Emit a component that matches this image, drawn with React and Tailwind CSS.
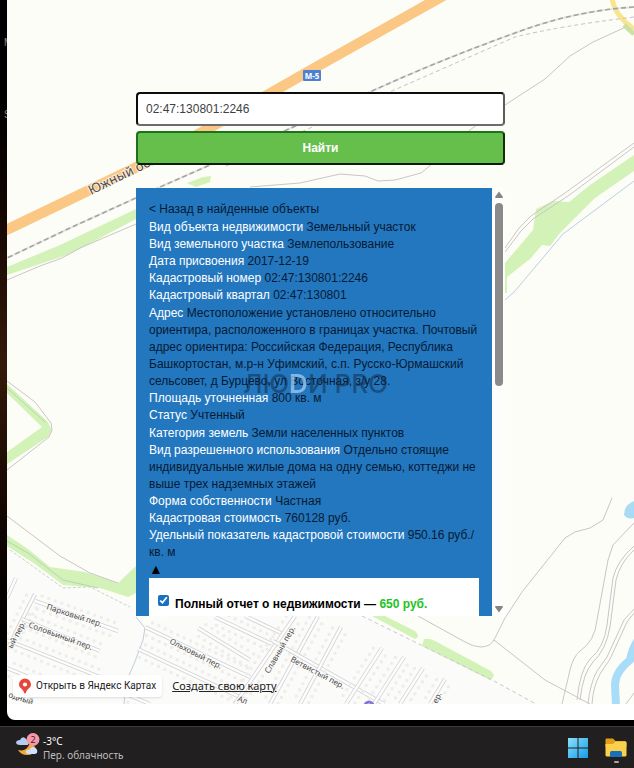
import React from "react";

const STREETS = [
  [16, 578, 7, 598, 0],
  [35, 594, 9, 646, 1],
  [35, 601, 118, 631, 1],
  [22, 619, 100, 651, 1],
  [7, 640, 100, 677, 1],
  [7, 668, 60, 690, 1],
  [145, 627, 250, 677, 1],
  [138, 649, 246, 700, 1],
  [198, 628, 250, 660, 1],
  [215, 617, 272, 644, 1],
  [245, 616, 281, 633, 0],
  [295, 616, 235, 704, 1],
  [318, 616, 270, 704, 1],
  [273, 641, 384, 704, 0],
  [341, 627, 300, 704, 1],
  [382, 648, 346, 704, 1],
  [404, 657, 374, 704, 1],
  [423, 668, 400, 704, 1],
  [445, 679, 430, 704, 1],
  [126, 694, 150, 704, 1],
];

const LABELS = [
  ["Парковый пер.", 46, 609, 18, 8],
  ["Соловьиный пер.", 28, 627, 20, 8],
  ["ый пер.", 12, 649, -62, 8],
  ["Ольховый пер.", 169, 643, 27, 8],
  ["Славный пер.", 269, 674, -60, 8],
  ["Ветвистый пер.", 290, 661, 28, 8],
  ["ер.", 437, 704, -64, 8],
  ["Ал", 237, 701, 20, 8],
  ["одный", 8, 697, 18, 8],
  ["Южный обход", 91, 195, -26, 13],
];

function Street({ line }) {
  const [x1, y1, x2, y2, houses] = line;
  const dx = x2 - x1;
  const dy = y2 - y1;
  const len = Math.hypot(dx, dy);
  const nx = -dy / len;
  const ny = dx / len;
  const dots = [];
  if (houses) {
    for (let d = 5; d < len; d += 7) {
      for (const side of [-7, 7]) {
        dots.push([x1 + (dx * d) / len + nx * side, y1 + (dy * d) / len + ny * side]);
      }
    }
  }
  return (
    <g>
      <path d={`M${x1} ${y1}L${x2} ${y2}`} stroke="#d3d2d4" strokeWidth="4" />
      <path d={`M${x1} ${y1}L${x2} ${y2}`} stroke="#fefefe" strokeWidth="2.4" />
      {dots.map(([x, y], i) => (
        <rect key={i} x={x - 1.5} y={y - 1.5} width="3" height="3" fill="#efedea" />
      ))}
    </g>
  );
}

function MapDrawing() {
  return (
    <svg
      className="absolute inset-0 h-full w-full"
      viewBox="7 0 627 704"
      preserveAspectRatio="xMidYMin slice"
      fill="none"
      aria-hidden="true"
    >
      <rect x="7" width="627" height="704" fill="#fdfdf8" />
      <path d="M7 546L63 586 128 600 145 625 250 590 360 615 494 680 535 704H7Z" fill="#fbfbf9" />

      <g fill="#d3f2b8">
        <path d="M7 267L60 245 136 209V219L70 254 7 275Z" />
        <path d="M187 183L203 177 211 176 210 182 196 187Z" />
        <path d="M505 263L533 230 536 209 553 201 569 202 590 185 634 155V171L595 198 560 233 550 246 542 245 530 259 507 277V293H505Z" />
        <path d="M7 384L47 421 52 430 48 437 7 464V452L42 427 7 393Z" />
        <path d="M7 535L28 549 50 567 85 572 118 583 136 566V593L128 597 100 588 63 585 35 564 7 546Z" />
        <path d="M372 616H385L415 631Q421 637 415 639Z" />
        <path d="M424 639Q429 638 435 641L491 671Q497 677 490 680L422 646Z" />
      </g>

      <g stroke="#cac5c8" strokeWidth="1">
        <path d="M7 280L40 266 62 258 80 248 136 224" />
        <path d="M7 381L35 402 51 423 52 430 49 437 7 470" />
        <path d="M7 388L45 422" stroke="#b9d3ad" />
        <path d="M7 516L60 556 90 573 118 583" />
        <path d="M7 541L28 553 63 580 98 588" stroke="#bcd0b8" />
        <path d="M505 248L519 228 531 216 565 193 634 143" />
        <path d="M505 252L521 231 533 219 568 196 634 147" />
        <path d="M505 300L515 291 563 234 634 181" stroke="#b9cfe2" />
        <path d="M505 105L545 79 570 56 593 42 628 26" />
        <path d="M250 187L300 183 340 174 365 176 378 181 395 180 421 173 432 164 470 130 478 124" />
        <path d="M612 498L603 520 590 528 575 532 565 538 522 592 505 618 495 638Q491 647 481 647 474 647 465 642L418 616" />
        <path d="M494 640L545 680 590 704" />
        <path d="M634 523L613 545 608 560 597 620Q595 641 580 651 573 657 570 670L562 704" />
        <path d="M634 546Q617 561 613 578L607 625Q604 648 590 659 580 670 577 700" />
        <path d="M634 550Q620 563 616 580L610 627Q606 650 593 662 583 673 580 700" />
        <path d="M634 609L624 620 613 644 607 657 597 671Q590 684 588 704" />
        <path d="M634 613L627 622 616 646 610 659 600 674Q593 687 592 704" />
        <path d="M626 704L634 693" />
        <path d="M136 617L145 628 143 640 134 664 126 682 124 704" stroke="#bfcddd" />
      </g>
      <path d="M10 550L45 575 63 588 90 587 130 607" stroke="#c3d6c6" strokeDasharray="3 2" />
      <path d="M362 616L494 681 536 704" stroke="#c9c6dc" strokeDasharray="4 3" />

      {STREETS.map((line, i) => (
        <Street key={i} line={line} />
      ))}

      <path d="M612 -2Q614 15 634 29" stroke="#fae58f" strokeWidth="5" />
      <path d="M624 25L634 34" stroke="#c9e2a4" strokeWidth="5" />
      <path d="M634 501Q624 505 624 515 628 520 634 518Z" fill="#a9dcf4" />
      <path d="M638 640Q632 649 630 660 615 672 615 685L616 706" stroke="#a9dcf7" strokeWidth="8" />
      <circle cx="369" cy="706" r="4" stroke="#8378d8" strokeWidth="3" />

      <path d="M450 -8L318 66 213 126 145 163 75 197 0 233" stroke="#fac884" strokeWidth="10.500" />
      <path d="M634 7Q573 11 515 33 440 60 372 91L210 165 160 187 70 228 7 258" stroke="#e8e6e4" strokeWidth="2" />
      <path
        d="M634 7Q573 11 515 33 440 60 372 91L210 165 160 187 70 228 7 258"
        stroke="#a5a3a4"
        strokeWidth="1.600"
        strokeDasharray="5 3"
      />
      <path d="M634 17Q560 26 515 37L392 91 226 166" stroke="#c4c1c2" strokeDasharray="4 3" />

      <g fontFamily="'Noto Sans', sans-serif" fill="#4c4b4c" stroke="#fdfdfb" strokeWidth="2" strokeOpacity="0.7" paintOrder="stroke">
        {LABELS.map(([text, x, y, angle, size]) => (
          <text key={text} transform={`translate(${x} ${y}) rotate(${angle})`} fontSize={size}>
            {text}
          </text>
        ))}
      </g>
      <rect x="303" y="70" width="18" height="11" rx="1" fill="#4d80d2" />
      <text x="312" y="79" fontSize="8" fontWeight="700" textAnchor="middle" fill="#fff" fontFamily="'Noto Sans', sans-serif">
        М-5
      </text>
    </svg>
  );
}

const GROUPS = [
  [
    ["Вид объекта недвижимости", "Земельный участок"],
    ["Вид земельного участка", "Землепользование"],
    ["Дата присвоения", "2017-12-19"],
    ["Кадастровый номер", "02:47:130801:2246"],
    ["Кадастровый квартал", "02:47:130801"],
  ],
  [
    [
      "Адрес",
      "Местоположение установлено относительно ориентира, расположенного в границах участка. Почтовый адрес ориентира: Российская Федерация, Республика Башкортостан, м.р-н Уфимский, с.п. Русско-Юрмашский сельсовет, д Бурцево, ул Восточная, з/у 28.",
    ],
    ["Площадь уточненная", "800 кв. м"],
    ["Статус", "Учтенный"],
  ],
  [
    ["Категория земель", "Земли населенных пунктов"],
    [
      "Вид разрешенного использования",
      "Отдельно стоящие индивидуальные жилые дома на одну семью, коттеджи не выше трех надземных этажей",
    ],
    ["Форма собственности", "Частная"],
    ["Кадастровая стоимость", "760128 руб."],
    ["Удельный показатель кадастровой стоимости", "950.16 руб./кв. м"],
  ],
];

function SearchForm() {
  return (
    <form className="flex flex-col gap-[5px]" onSubmit={(e) => e.preventDefault()}>
      <input
        type="text"
        aria-label="Кадастровый номер"
        defaultValue="02:47:130801:2246"
        className="h-[34px] w-full rounded border-2 border-t-[#0c0c0c] border-r-[#5c5c5c] border-b-[#6c6c6c] border-l-[#0c0c0c] bg-white px-2 text-[#3f3f3f] outline-none"
      />
      <button
        type="submit"
        className="h-[34px] w-full rounded border-2 border-t-[#1d701c] border-r-[#10300e] border-b-[#0a1c09] border-l-[#1d701c] bg-[#66be4b] font-bold text-white"
      >
        Найти
      </button>
    </form>
  );
}

function Scrollbar() {
  return (
    <div className="flex w-[13px] shrink-0 flex-col items-center bg-[#fdfdfc] py-[3px]" aria-hidden="true">
      <svg className="h-2 w-2" viewBox="0 0 8 8" fill="#858585">
        <path d="M4 0.5L8 6Q8 7 7 7H1Q0 7 0 6Z" />
      </svg>
      <div className="mt-1 h-[183px] w-2 rounded-full bg-[#8a8a8a]" />
      <svg className="mt-auto h-2 w-2" viewBox="0 0 8 8" fill="#858585">
        <path d="M4 7.5L8 2Q8 1 7 1H1Q0 1 0 2Z" />
      </svg>
    </div>
  );
}

function ObjectPanel() {
  return (
    <section className="relative flex h-[428px]">
      <div className="min-w-0 flex-1 overflow-y-auto bg-[#2377bf] p-[13px] leading-[17px] text-[#061a33] [scrollbar-width:none]">
        <div className="flex flex-col gap-px">
          <a href="#results" className="block">
            &lt; Назад в найденные объекты
          </a>
          {GROUPS.map((rows, i) => (
            <dl key={i}>
              {rows.map(([label, value]) => (
                <div key={label}>
                  <dt className="inline text-white">{label}</dt> <dd className="inline">{value}</dd>
                </div>
              ))}
            </dl>
          ))}
        </div>
        <button type="button" aria-label="Свернуть" className="block text-sm leading-[17px] text-black">
          ▲
        </button>
        <div className="bg-white px-[9px] pt-[17px] pb-4">
          <label className="flex gap-[6px] font-bold text-black">
            <input type="checkbox" defaultChecked className="h-[11px] w-[11px] accent-[#1a70c2]" />
            <span className="pt-px">
              Полный отчет о недвижимости — <span className="text-[#22c322]">650 руб.</span>
            </span>
          </label>
        </div>
      </div>
      <Scrollbar />
      <div className="pointer-events-none absolute top-[178px] left-[107px] font-['Inter',sans-serif] text-[26px] leading-9 font-medium whitespace-nowrap text-[#12263f]/50">
        ЛЮ<span className="font-semibold text-[#9cc4ea]/80">D</span>И PRO
      </div>
    </section>
  );
}

function MapLinks() {
  return (
    <div className="mt-[59px] flex items-center gap-[10px] pb-[7px] pl-[6px]">
      <a
        href="#maps"
        className="flex h-[22px] items-center gap-1 rounded bg-white pr-[6px] pl-[5px] font-['Roboto',sans-serif] text-[10px] whitespace-nowrap text-[#222] shadow"
      >
        <svg className="h-4 w-[14px]" viewBox="0 0 14 16">
          <path d="M7 0.5A6 6 0 0 0 1 6.5C1 10.5 5.500 10.500 6.200 15.200H7.800C8.500 10.500 13 10.500 13 6.500A6 6 0 0 0 7 .5Z" fill="#e8453c" />
          <circle cx="7" cy="6.500" r="2.100" fill="#fff" />
        </svg>
        Открыть в Яндекс Картах
      </a>
      <a href="#create" className="font-['Noto_Sans',sans-serif] text-[11px] whitespace-nowrap text-[#222] underline">
        Создать свою карту
      </a>
    </div>
  );
}

function WeatherIcon() {
  return (
    <svg className="h-6 w-6" viewBox="0 0 24 24">
      <path d="M13 12Q18 11 20 16 18 22 11 22 5 22 2 17 10 19 13 12Z" fill="#f2a83b" />
      <path d="M4 12Q0 12 0 9 1 7 4 7 6 3 9 5L12 8V12Z" fill="#b4cbf2" />
      <path d="M12 21Q9 20 10 18 11 16 13 17 16 12 19 15 22 16 21 20L19 21Z" fill="#cfe2fb" />
      <circle cx="17" cy="6.500" r="6.500" fill="#f59aa8" />
      <text x="17" y="10" fontSize="9" textAnchor="middle" fill="#5a1626" fontFamily="'Noto Sans', sans-serif">
        2
      </text>
    </svg>
  );
}

function Taskbar() {
  return (
    <footer className="flex h-[42px] items-center border-t border-[#3d3b3c] bg-[#221f20] pr-[7px] pl-4 font-['Noto_Sans',sans-serif] text-[10px] leading-[14px]">
      <button type="button" className="flex items-center gap-[3px] text-left">
        <span className="-mt-[6px]">
          <WeatherIcon />
        </span>
        <span className="flex flex-col">
          <span className="text-white">-3°C</span>
          <span className="text-[#bdbcbc]">Пер. облачность</span>
        </span>
      </button>
      <div className="ml-auto flex items-center gap-4">
        <button type="button" aria-label="Пуск">
          <svg className="h-[22px] w-[22px]" viewBox="0 0 22 22">
            <defs>
              <linearGradient id="win" x1="0" y1="0" x2="1" y2="1">
                <stop offset="0" stopColor="#8ae0fb" />
                <stop offset="1" stopColor="#169be6" />
              </linearGradient>
            </defs>
            <path d="M1 1H10.500V10.500H1ZM11.500 1H21V10.500H11.500ZM1 11.500H10.500V21H1ZM11.500 11.500H21V21H11.500Z" fill="url(#win)" />
          </svg>
        </button>
        <button type="button" aria-label="Проводник" className="flex flex-col items-center gap-[3px] pt-[6px]">
          <svg className="h-[20px] w-[22px]" viewBox="0 0 22 20">
            <path d="M0.500 1.500Q.5 .5 1.500 .5H8L10.500 3H20Q21.500 3 21.500 4.500V9H.5Z" fill="#e39d17" />
            <path d="M.5 6H8L10.500 3.500H20Q21.500 3.500 21.500 5V17Q21.500 18.500 20 18.500H2Q.5 18.500 .5 17Z" fill="#fbd04b" />
            <path d="M5 19V14.500Q5 13 6.500 13H15.500Q17 13 17 14.500V19Z" fill="#1770b8" />
          </svg>
          <span className="h-[2px] w-[5px] rounded-full bg-[#a9a7a8]" />
        </button>
      </div>
    </footer>
  );
}

export default function App() {
  return (
    <div className="flex min-h-screen flex-col bg-black font-['Liberation_Sans',Arial,sans-serif] text-xs">
      <div className="flex flex-1">
        <aside className="flex w-[7px] shrink-0 flex-col overflow-hidden bg-linear-to-b from-black via-[#351a0b] to-black pt-[34px] pl-1 text-[10px] leading-[18px] text-[#8a8a8a]">
          <span>M</span>
          <span className="mt-[54px]">S</span>
        </aside>
        <main className="mb-[6px] min-w-0 flex-1 overflow-hidden rounded-bl-lg bg-white pb-4">
          <div className="relative overflow-hidden">
            <MapDrawing />
            <div className="relative">
              <div className="mx-auto flex max-w-[369px] flex-col gap-[23px] pt-[92px]">
                <SearchForm />
                <ObjectPanel />
              </div>
              <MapLinks />
            </div>
          </div>
        </main>
      </div>
      <Taskbar />
    </div>
  );
}
